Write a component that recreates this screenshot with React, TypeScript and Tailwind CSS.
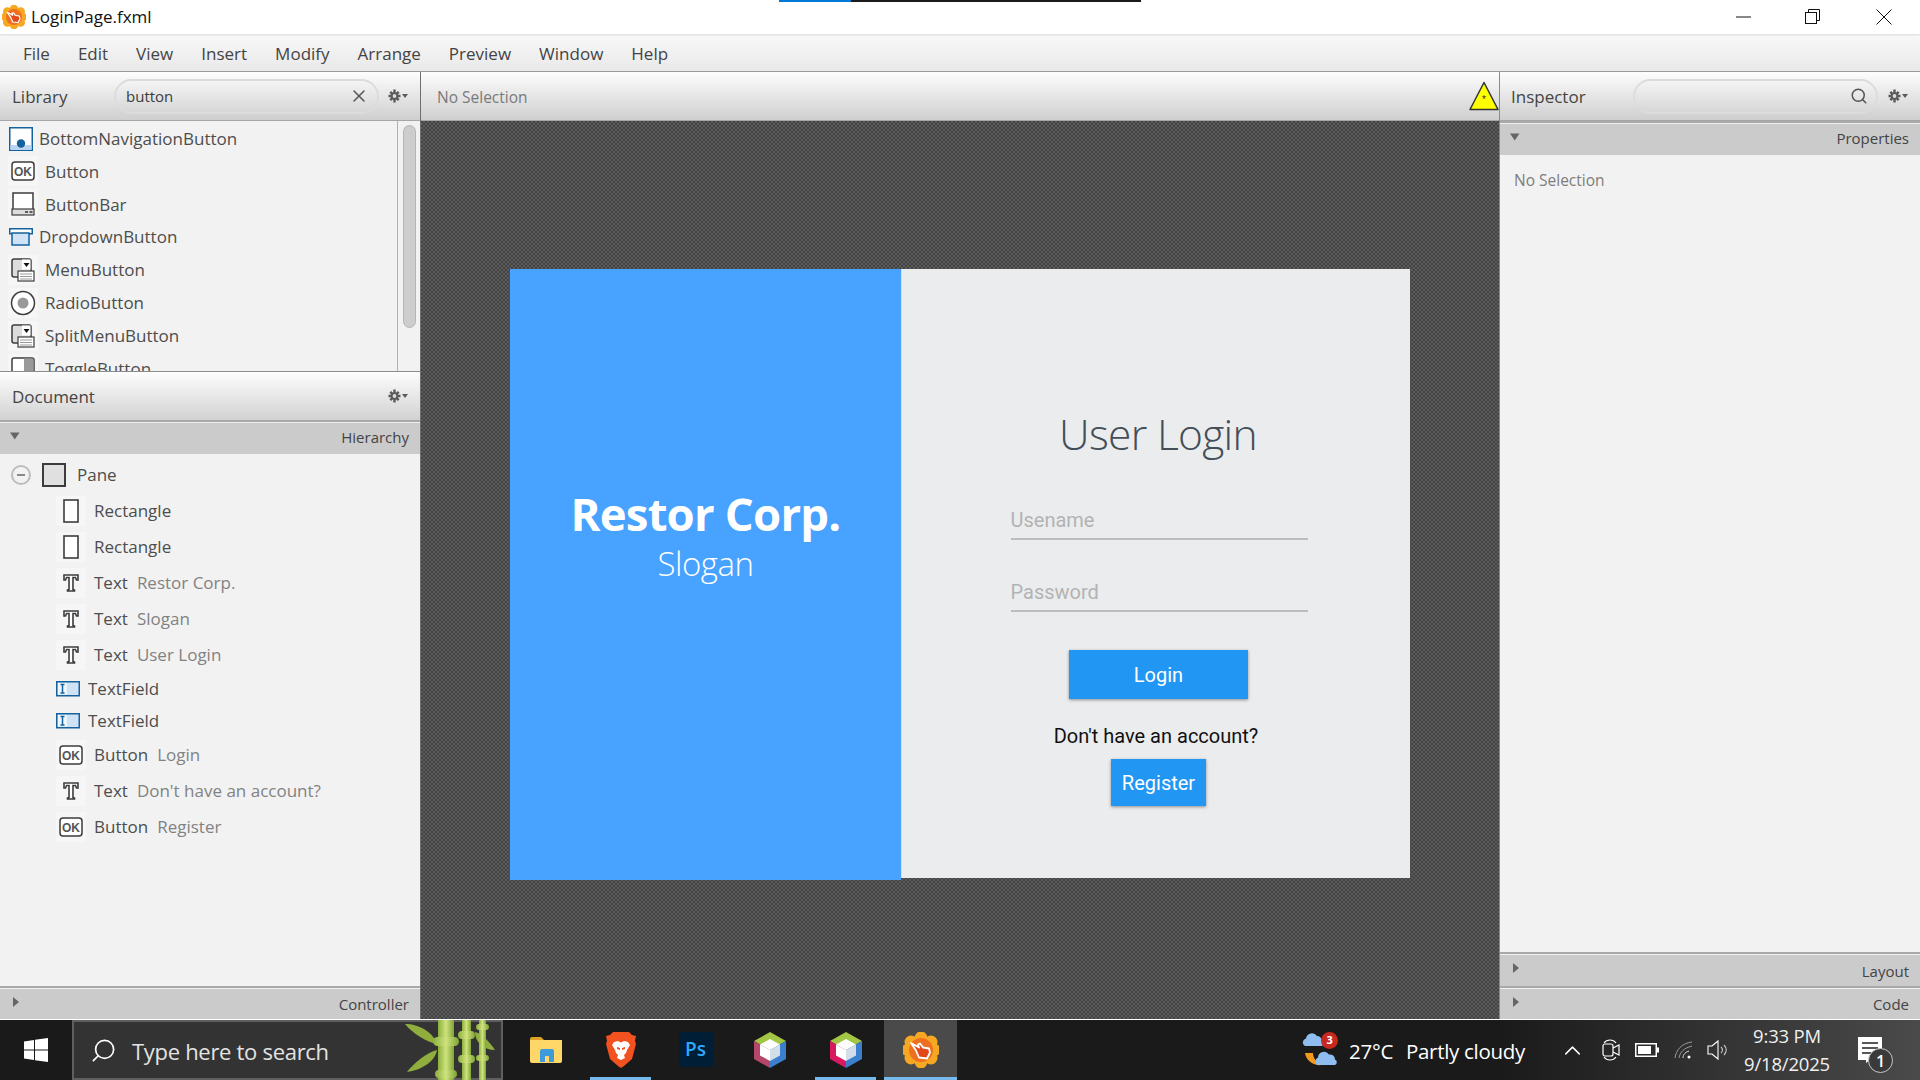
import React from "react";
import { Search, X, ChevronUp } from "lucide-react";

const MENU = ["File", "Edit", "View", "Insert", "Modify", "Arrange", "Preview", "Window", "Help"];

type IconKind = "ok" | "bar" | "menu" | "radio" | "rect" | "text" | "field" | "toggle";

const Framed = ({ children }: { children: React.ReactNode }) => (
  <span className="flex h-[30px] w-[30px] shrink-0 items-center justify-center bg-[#f6f6f6]">{children}</span>
);

const ItemIcon = ({ kind }: { kind: IconKind }) => {
  if (kind === "ok")
    return (
      <svg width="24" height="20" viewBox="0 0 24 20">
        <rect x="1" y="1" width="22" height="18" rx="3" fill="#fff" stroke="#3c3c3c" strokeWidth="1.5" />
        <text x="12" y="14.5" textAnchor="middle" fontSize="12" fontWeight="700" fill="#555" fontFamily="Liberation Sans">OK</text>
      </svg>
    );
  if (kind === "bar")
    return (
      <svg width="24" height="24" viewBox="0 0 24 24">
        <rect x="2" y="1" width="20" height="17" fill="#fff" stroke="#3c3c3c" strokeWidth="1.5" />
        <rect x="1" y="17" width="22" height="6" fill="#ddd" stroke="#3c3c3c" strokeWidth="1.2" />
        <path d="M14 20h3M18.5 20h3" stroke="#333" strokeWidth="1.4" />
      </svg>
    );
  if (kind === "menu")
    return (
      <svg width="26" height="26" viewBox="0 0 26 26">
        <rect x="2" y="2" width="19" height="18" rx="2" fill="#ddd" stroke="#3c3c3c" strokeWidth="1.5" />
        <rect x="12" y="2.5" width="8.5" height="10" fill="#fff" />
        <path d="M13.5 6h6l-3 4z" fill="#111" />
        <rect x="8" y="14" width="16" height="10" fill="#fff" stroke="#3c3c3c" strokeWidth="1.2" />
        <path d="M10 17h12M10 19.5h12M10 22h12" stroke="#999" />
      </svg>
    );
  if (kind === "radio")
    return (
      <svg width="26" height="26" viewBox="0 0 26 26">
        <circle cx="13" cy="13" r="11.5" fill="#fff" stroke="#3c3c3c" strokeWidth="1.5" />
        <circle cx="13" cy="13" r="5.5" fill="#999" />
      </svg>
    );
  if (kind === "rect")
    return (
      <svg width="16" height="24" viewBox="0 0 16 24">
        <rect x="1" y="1" width="14" height="22" fill="#fff" stroke="#3c3c3c" strokeWidth="1.6" />
      </svg>
    );
  if (kind === "text")
    return (
      <svg width="16" height="18" viewBox="0 0 16 18">
        <path d="M1 1h14v5h-1.5l-1-2.5H10V15.5l1.5.5v1h-7v-1l1.5-.5V3.500H3.500l-1 2.500H1z" fill="#fff" stroke="#3c3c3c" strokeWidth="1.6" />
      </svg>
    );
  if (kind === "field")
    return (
      <svg width="24" height="16" viewBox="0 0 24 16">
        <rect x="0.750" y="0.750" width="22.500" height="14" fill="#cfe2f6" stroke="#14639f" strokeWidth="1.5" />
        <rect x="2" y="2" width="9" height="11.500" fill="#fff" opacity="0.7" />
        <path d="M4.500 3.500h4M4.500 12h4M6.500 3.500V12" stroke="#14639f" strokeWidth="1.500" fill="none" />
      </svg>
    );
  return (
    <svg width="24" height="24" viewBox="0 0 24 24">
      <rect x="1" y="1" width="22" height="24" rx="2" fill="#fff" stroke="#3c3c3c" strokeWidth="1.5" />
      <rect x="13" y="1.500" width="9.500" height="23" fill="#999" />
    </svg>
  );
};

const BottomNavIcon = () => (
  <svg width="24" height="24" viewBox="0 0 24 24" className="shrink-0">
    <rect x="0.750" y="0.750" width="22.500" height="22.500" fill="#fff" stroke="#14639f" strokeWidth="1.500" />
    <rect x="1.500" y="18" width="21" height="5" fill="#b9d5ef" />
    <circle cx="12" cy="16.500" r="4.200" fill="#14639f" />
  </svg>
);

const DropdownIcon = () => (
  <svg width="24" height="18" viewBox="0 0 24 18" className="shrink-0">
    <rect x="0.750" y="0.750" width="22.500" height="5" fill="#fff" stroke="#14639f" strokeWidth="1.500" />
    <rect x="3" y="5" width="17" height="12" fill="#cfe2f6" stroke="#14639f" strokeWidth="1.500" />
  </svg>
);

const Gear = () => (
  <svg width="20" height="14" viewBox="0 0 20 14" className="shrink-0">
    <g stroke="#5a5a5a" strokeWidth="2.400">
      <path d="M6.500 .5v13M.5 7h12M2.300 2.800l8.400 8.400M10.700 2.800l-8.400 8.400" />
    </g>
    <circle cx="6.500" cy="7" r="3.800" fill="#5a5a5a" />
    <circle cx="6.500" cy="7" r="1.900" fill="#dcdcdc" />
    <path d="M14 5h6l-3 4z" fill="#5a5a5a" />
  </svg>
);

const HeaderShell = ({ children, className = "" }: { children: React.ReactNode; className?: string }) => (
  <div className={`flex h-[49px] shrink-0 items-center border-b border-[#a6a6a6] bg-[linear-gradient(#fdfdfd,#cfcfcf)] ${className}`}>
    {children}
  </div>
);

const PillField = ({ children, className = "" }: { children?: React.ReactNode; className?: string }) => (
  <div className={`flex h-[35px] items-center justify-between rounded-full border-2 border-[#dcdcdc] ${className}`}>
    {children}
  </div>
);

const SectionBar = ({ label, open = false, height = "h-[34px]" }: { label: string; open?: boolean; height?: string }) => (
  <div className={`flex ${height} shrink-0 items-center justify-between border-t-2 border-[#a9a9a9] bg-[#cbcbcb] pl-[10px] pr-[11px] shadow-[inset_0_1px_0_#efefef]`}>
    <svg width="10" height="10" viewBox="0 0 10 10" className="-mt-[4px]">
      {open ? <path d="M0 1.500h9.500L4.750 8.500z" fill="#666" /> : <path d="M3 0v10l6-5z" fill="#666" />}
    </svg>
    <span className={`text-[15px] text-[#444] ${open ? "-mt-[1px]" : "mt-[2px]"}`}>{label}</span>
  </div>
);

const LIBRARY: { name: string; kind: IconKind | "nav" | "drop" }[] = [
  { name: "BottomNavigationButton", kind: "nav" },
  { name: "Button", kind: "ok" },
  { name: "ButtonBar", kind: "bar" },
  { name: "DropdownButton", kind: "drop" },
  { name: "MenuButton", kind: "menu" },
  { name: "RadioButton", kind: "radio" },
  { name: "SplitMenuButton", kind: "menu" },
  { name: "ToggleButton", kind: "toggle" },
];

const LibraryList = () => (
  <div className="flex h-[250px] shrink-0 overflow-hidden">
    <div className="w-[397px] overflow-hidden pl-[9px] pt-[2px]">
      {LIBRARY.map((item, i) => (
        <div key={item.name} className={`flex items-center text-[17px] text-[#4d4d4d] ${i === 0 ? "h-[32px]" : "h-[32.900px]"}`}>
          {item.kind === "nav" ? (
            <span className="mr-[6px] flex items-center"><BottomNavIcon /></span>
          ) : item.kind === "drop" ? (
            <span className="mr-[6px] flex items-center"><DropdownIcon /></span>
          ) : (
            <span className="-ml-[1px] mr-[7px]">
              <Framed>
                <ItemIcon kind={item.kind} />
              </Framed>
            </span>
          )}
          <span>{item.name}</span>
        </div>
      ))}
    </div>
    <div className="flex-1 border-l border-[#b0b0b0] pl-[5px] pt-[4px]">
      <div className="h-[203px] w-[13px] rounded-full border border-[#b5b5b5] bg-[#cdcdcd]" />
    </div>
  </div>
);

const TREE: { kind: IconKind; name: string; value?: string; h: string }[] = [
  { kind: "rect", name: "Rectangle", h: "h-[36px]" },
  { kind: "rect", name: "Rectangle", h: "h-[36px]" },
  { kind: "text", name: "Text", value: "Restor Corp.", h: "h-[36px]" },
  { kind: "text", name: "Text", value: "Slogan", h: "h-[36px]" },
  { kind: "text", name: "Text", value: "User Login", h: "h-[36px]" },
  { kind: "field", name: "TextField", h: "h-[32px]" },
  { kind: "field", name: "TextField", h: "h-[32px]" },
  { kind: "ok", name: "Button", value: "Login", h: "h-[36px]" },
  { kind: "text", name: "Text", value: "Don't have an account?", h: "h-[36px]" },
  { kind: "ok", name: "Button", value: "Register", h: "h-[36px]" },
];

const HierarchyTree = () => (
  <div className="flex-1 pt-[2px] text-[17px] text-[#4d4d4d]">
    <div className="flex h-[37px] items-center pl-[11px]">
      <span className="flex h-[20px] w-[20px] items-center justify-center rounded-full border-2 border-[#bdbdbd]">
        <span className="h-[2px] w-[8px] bg-[#888]" />
      </span>
      <span className="ml-[11px] h-[24px] w-[24px] border-2 border-[#3c3c3c] bg-[#e0e0e0]" />
      <span className="ml-[11px]">Pane</span>
    </div>
    {TREE.map((row, i) => (
      <div key={i} className={`flex ${row.h} items-center`}>
        {row.kind === "field" ? (
          <span className="ml-[56px] mr-[8px] flex"><ItemIcon kind="field" /></span>
        ) : (
          <span className="ml-[56px] mr-[8px]">
            <Framed>
              <ItemIcon kind={row.kind} />
            </Framed>
          </span>
        )}
        <span>{row.name}</span>
        {row.value && <span className="ml-[9px] text-[#828282]">{row.value}</span>}
      </div>
    ))}
  </div>
);

const LeftPanel = () => (
  <aside className="flex w-[421px] shrink-0 flex-col border-r border-[#6f6f6f] bg-[#f2f2f2]">
    <HeaderShell className="pl-[12px] pr-[12px]">
      <span className="mt-[2px] w-[102px] text-[17px] text-[#444]">Library</span>
      <PillField className="w-[265px] pl-[10px] pr-[8px]">
        <span className="text-[15px] text-[#3c3c3c]">button</span>
        <X size={20} strokeWidth={1.800} className="text-[#555]" />
      </PillField>
      <span className="ml-auto"><Gear /></span>
    </HeaderShell>
    <LibraryList />
    <div className="flex h-[49px] shrink-0 items-center justify-between border-t border-[#8c8c8c] bg-[linear-gradient(#fdfdfd,#d2d2d2)] pl-[12px] pr-[12px]">
      <span className="mt-[1px] text-[17px] text-[#444]">Document</span>
      <Gear />
    </div>
    <SectionBar label="Hierarchy" open />
    <HierarchyTree />
    <SectionBar label="Controller" height="h-[33px]" />
  </aside>
);

const LoginPane = () => (
  <div className="flex h-[611px] w-[900px] items-start">
    <div className="flex h-[611px] w-[391px] flex-col items-center bg-[#48a2ff] pt-[214px] text-white">
      <div className="text-[45.500px] font-bold leading-[60px] tracking-[-0.800px]">Restor Corp.</div>
      <div className="-mt-[1px] text-[33px] font-light leading-[44px] tracking-[-0.500px]">Slogan</div>
    </div>
    <div className="flex h-[609px] flex-1 flex-col items-center border-l border-[#cfdff0] bg-[#ebecee]">
      <div className="mt-[140px] pl-[4px] text-[42.500px] font-light leading-[50px] tracking-[-0.700px] text-[#434e58]">User Login</div>
      <div className="ml-[6px] mt-[44px] flex h-[37px] w-[297px] items-center border-b-2 border-[#bdbdbd] pb-[2px] font-['Roboto',sans-serif] text-[20px] text-[#b3b3b3]">Usename</div>
      <div className="ml-[6px] mt-[35px] flex h-[37px] w-[297px] items-center border-b-2 border-[#bdbdbd] pb-[2px] font-['Roboto',sans-serif] text-[20px] text-[#b3b3b3]">Password</div>
      <div className="ml-[5px] mt-[38px] flex h-[49px] w-[179px] items-center justify-center bg-[#2196f3] font-['Roboto',sans-serif] text-[20px] text-white shadow-[0_1px_3px_rgba(0,0,0,0.4)]">Login</div>
      <div className="mt-[23px] font-['Roboto',sans-serif] text-[20px] leading-[28px] text-[#111]">Don't have an account?</div>
      <div className="ml-[5px] mt-[9px] flex h-[47px] w-[95px] items-center justify-center bg-[#2196f3] font-['Roboto',sans-serif] text-[20px] text-white shadow-[0_1px_3px_rgba(0,0,0,0.4)]">Register</div>
    </div>
  </div>
);

const CenterPanel = () => (
  <main className="flex min-w-0 flex-1 flex-col">
    <HeaderShell className="justify-between pl-[16px]">
      <span className="mt-[3px] text-[15.500px] text-[#7a7a7a]">No Selection</span>
      <svg width="30" height="30" viewBox="0 0 30 30">
        <path d="M15 1.500 29 28.500H1z" fill="#ffff00" stroke="#333" strokeWidth="1.500" strokeLinejoin="round" />
        <text x="15" y="22" textAnchor="middle" fontSize="10" fill="#333" fontFamily="Liberation Sans">*</text>
      </svg>
    </HeaderShell>
    <div className="flex flex-1 items-center justify-center bg-[repeating-conic-gradient(#5b5b5b_0_25%,#434343_0_50%)] bg-[length:4px_4px] pt-[9px]">
      <LoginPane />
    </div>
  </main>
);

const RightPanel = () => (
  <aside className="flex w-[421px] shrink-0 flex-col border-l border-[#8a8a8a] bg-[#f2f2f2]">
    <HeaderShell className="pl-[11px] pr-[12px]">
      <span className="mt-[2px] w-[122px] text-[17px] text-[#444]">Inspector</span>
      <PillField className="w-[245px] pr-[8px]">
        <span />
        <Search size={18} strokeWidth={2} className="text-[#555]" />
      </PillField>
      <span className="ml-auto"><Gear /></span>
    </HeaderShell>
    <SectionBar label="Properties" open />
    <div className="flex-1 pl-[14px] pt-[14px] text-[15.500px] text-[#7d7d7d]">No Selection</div>
    <SectionBar label="Layout" />
    <SectionBar label="Code" height="h-[33px]" />
  </aside>
);

const SceneLogo = ({ size }: { size: number }) => (
  <svg width={size} height={size} viewBox="0 0 36 36" className="shrink-0">
    {[[18, 6], [28, 10], [31, 18], [28, 26], [18, 30], [8, 26], [5, 18], [8, 10]].map(([cx, cy]) => (
      <circle key={`${cx}-${cy}`} cx={cx} cy={cy} r="6.500" fill="#f7a823" />
    ))}
    <circle cx="18" cy="18" r="12" fill="#ee6f1f" />
    <path d="M8 11l8 4.500-1-3 2-1 3 4 6 1 1 4-3 6-8-1-3-7z" fill="#e2491a" stroke="#fff" strokeWidth="1.800" strokeLinejoin="round" />
  </svg>
);

const NetBeans = ({ left }: { left: string }) => (
  <svg width="32" height="36" viewBox="0 0 32 36">
    <path d="M16 0 32 9 16 18 0 9z" fill="#a3c644" />
    <path d="M0 9 16 18V36L0 27z" fill={left} />
    <path d="M32 9 16 18V36L32 27z" fill="#3c7fcc" />
    <path d="M16 7 26 12.500 16 18 6 12.500z" fill="#fff" />
    <path d="M6 12.500 16 18V29L6 23.500z" fill="#fff" />
    <path d="M26 12.500 16 18V29L26 23.500z" fill="#d3deea" />
  </svg>
);

const Bamboo = () => (
  <svg width="91" height="60" viewBox="0 0 91 60">
    <defs>
      <linearGradient id="stalk" x1="0" x2="1" y1="0" y2="0">
        <stop offset="0" stopColor="#8bb03c" />
        <stop offset="0.500" stopColor="#cfe27e" />
        <stop offset="1" stopColor="#7ea434" />
      </linearGradient>
    </defs>
    <path d="M32 24C22 22 8 14 0 4 14 4 28 12 32 24z" fill="#8fae3e" />
    <path d="M32 30C22 32 8 44 2 52 16 50 30 42 32 30z" fill="#8fae3e" />
    <path d="M70 12C78 14 86 24 90 30 78 30 70 22 70 12z" fill="#8fae3e" />
    <rect x="33" y="0" width="16" height="60" fill="url(#stalk)" />
    <rect x="57" y="0" width="9" height="60" fill="url(#stalk)" />
    <rect x="74" y="0" width="7" height="60" fill="url(#stalk)" />
    <rect x="28" y="17" width="26" height="9" rx="4.500" fill="url(#stalk)" />
    <rect x="30" y="50" width="22" height="8" rx="4" fill="url(#stalk)" />
    <rect x="53" y="11" width="17" height="8" rx="4" fill="url(#stalk)" />
    <rect x="53" y="35" width="17" height="8" rx="4" fill="url(#stalk)" />
    <rect x="71" y="4" width="13" height="6" rx="3" fill="url(#stalk)" />
    <rect x="71" y="35" width="13" height="6" rx="3" fill="url(#stalk)" />
  </svg>
);

const WeatherIcon = () => (
  <svg width="38" height="34" viewBox="0 0 38 34">
    <path d="M4 20c1 8 9 13 17 12-6-3-9-7-9-12z" fill="#f29a1f" />
    <path d="M4 13a4 4 0 0 1 1-7.500A6 6 0 0 1 16 3a5 5 0 0 1 5 5 3 3 0 0 1 0 5z" fill="#8fbdf0" />
    <path d="M17 32a4 4 0 0 1 0-7.500 6 6 0 0 1 11-3 5 5 0 0 1 6 5 3 3 0 0 1 0 5.500z" fill="#8fbdf0" />
  </svg>
);

const TaskApp = ({ children, width, bar = false, active = false }: { children: React.ReactNode; width: string; bar?: boolean; active?: boolean }) => (
  <div className={`relative flex h-[60px] items-center justify-center pb-[1px] ${width} ${active ? "bg-[#4a4a4a]" : ""}`}>
    {children}
    {bar && <span className="absolute bottom-0 left-0 right-0 h-[3px] bg-[#76b9ed]" />}
  </div>
);

const Taskbar = () => (
  <footer className="flex h-[60px] shrink-0 items-center bg-[linear-gradient(90deg,#1a1a1a_0%,#1a1a1a_78%,#4a4a4a_100%)] text-white">
    <div className="flex h-[60px] w-[72px] shrink-0 items-center justify-center">
      <svg width="24" height="24" viewBox="0 0 24 24" fill="#fff">
        <path d="M0 3.500 10 2v9.500H0zM11 1.800 24 0v11.500H11zM0 12.500h10V22L0 20.500zM11 12.500h13V24l-13-1.800z" />
      </svg>
    </div>
    <div className="flex h-[60px] w-[431px] shrink-0 items-center justify-between border-2 border-[#5f5f5f] bg-[#333] pl-[16px] pr-[5px]">
      <div className="flex items-center">
        <Search size={27} strokeWidth={1.500} className="-scale-x-100 text-white" />
        <span className="ml-[15px] mt-[2px] text-[22px] tracking-[-0.300px] text-[#e3e3e3]">Type here to search</span>
      </div>
      <Bamboo />
    </div>
    <div className="ml-[5px] flex items-center">
      <TaskApp width="w-[75px]">
        <svg width="32" height="26" viewBox="0 0 32 26">
          <path d="M0 2a2 2 0 0 1 2-2h9l3 3H0z" fill="#dca326" />
          <path d="M0 3h32v21a2 2 0 0 1-2 2H2a2 2 0 0 1-2-2z" fill="#ffd768" />
          <path d="M10 25v-11a2 2 0 0 1 2-2h10a2 2 0 0 1 2 2v11h-5v-6h-4v6z" fill="#3d9bdc" />
        </svg>
      </TaskApp>
      <TaskApp width="w-[61px] mx-[7px]" bar>
        <svg width="30" height="36" viewBox="0 0 30 36">
          <path d="M7 0h16l3 3 4 1-1 5 1 3-4 15-8 7-3 2-3-2-8-7L0 12l1-3-1-5 4-1z" fill="#f1521f" />
          <path d="M8 10l4-1 3 1.500L18 9l4 1 2 3-3 5-1 3-2 2 1 3-4 2-4-2 1-3-2-2-1-3-3-5z" fill="#fff" />
          <path d="M11 15l3 1v2l-3-1zM19 15l-3 1v2l3-1z" fill="#f1521f" />
        </svg>
      </TaskApp>
      <TaskApp width="w-[75px]">
        <div className="flex h-[35px] w-[34px] items-center justify-center rounded-[3px] bg-[#001e36] text-[19px] font-semibold text-[#31a8ff]">Ps</div>
      </TaskApp>
      <TaskApp width="w-[74px] mr-[8px]">
        <NetBeans left="#b5476b" />
      </TaskApp>
      <TaskApp width="w-[61px] mr-[8px]" bar>
        <NetBeans left="#d81b60" />
      </TaskApp>
      <TaskApp width="w-[73px]" bar active>
        <SceneLogo size={36} />
      </TaskApp>
    </div>
    <div className="ml-auto flex items-center">
      <div className="relative mr-[10px] h-[34px] w-[38px]">
        <WeatherIcon />
        <span className="absolute -top-[1px] right-[1px] flex h-[17px] w-[17px] items-center justify-center rounded-full bg-[#c8281e] text-[11px] font-bold">3</span>
      </div>
      <span className="mt-[2px] text-[20.500px] tracking-[-0.300px]">27°C</span>
      <span className="ml-[13px] mt-[2px] text-[20.500px] tracking-[-0.300px]">Partly cloudy</span>
      <ChevronUp size={27} strokeWidth={1.300} className="ml-[34px]" />
      <svg width="20" height="28" viewBox="0 0 20 28" fill="none" stroke="#fff" strokeWidth="1.200" className="ml-[15px]">
        <path d="M3 7c3-4 9-4 12 0M3 21c3 4 9 4 12 0" />
        <rect x="2" y="8" width="10" height="12" rx="2" />
        <path d="M12 12l6-3v10l-6-3" />
      </svg>
      <svg width="24" height="14" viewBox="0 0 24 14" className="ml-[14px]">
        <rect x="0.750" y="0.750" width="20.500" height="12.500" fill="none" stroke="#fff" strokeWidth="1.500" />
        <rect x="3" y="3" width="13" height="8" fill="#fff" />
        <rect x="22" y="4.500" width="2" height="5" fill="#fff" />
      </svg>
      <svg width="20" height="20" viewBox="0 0 20 20" fill="none" stroke="#9a9a9a" strokeWidth="1" className="ml-[15px]">
        <path d="M1 18C2 10 8 3 18 2M5 18C6 12 10 8 18 6" />
        <path d="M9 18C9 14 12 12 15 11" stroke="#e0e0e0" />
        <circle cx="15" cy="17" r="1.500" fill="#fff" stroke="none" />
      </svg>
      <svg width="24" height="22" viewBox="0 0 24 22" fill="none" stroke="#fff" strokeWidth="1.100" className="ml-[13px]">
        <path d="M1 7h4l6-5v18l-6-5H1z" />
        <path d="M14 8c2 2 2 4 0 6M17 6c3 3 3 7 0 10" stroke="#c8c8c8" />
      </svg>
      <div className="ml-[10px] flex w-[92px] flex-col items-center text-[18.500px] leading-[28px] tracking-[-0.200px] text-[#f0f0f0]">
        <span>9:33 PM</span>
        <span>9/18/2025</span>
      </div>
      <div className="relative ml-[25px] mr-[38px] h-[26px] w-[24px]">
        <svg width="24" height="26" viewBox="0 0 24 26">
          <path d="M0 0h24v23H12l-4 3v-3H0z" fill="#fff" />
          <path d="M4 6h16M4 11h16M4 16h16" stroke="#222" strokeWidth="1.300" />
        </svg>
        <span className="absolute -bottom-[10px] -right-[11px] flex h-[25px] w-[25px] items-center justify-center rounded-full border border-[#c8c8c8] bg-[#3a3a3a] text-[16px] font-semibold">1</span>
      </div>
    </div>
  </footer>
);

export default function App() {
  return (
    <div className="flex h-[1080px] w-[1920px] flex-col overflow-hidden bg-white font-['Open_Sans',sans-serif]">
      <header className="relative flex h-[34px] shrink-0 items-center bg-white pl-[2px] shadow-[0_1px_2px_rgba(0,0,0,0.12)]">
        <SceneLogo size={24} />
        <span className="ml-[5px] text-[17px] text-[#111]">LoginPage.fxml</span>
        {/* loading strip sitting on the window top edge */}
        <div className="absolute left-[779px] top-0 flex h-[2px] w-[362px]">
          <span className="w-[72px] bg-[#0078d7]" />
          <span className="flex-1 bg-[#1a1a1a]" />
        </div>
        <div className="ml-auto flex items-center">
          <svg width="15" height="2" viewBox="0 0 15 2"><path d="M0 1h15" stroke="#111" /></svg>
          <svg width="16" height="16" viewBox="0 0 16 16" fill="none" stroke="#111" className="ml-[54px]">
            <rect x="0.500" y="3.500" width="11" height="11" fill="#fff" />
            <path d="M3.500 3V.5h11v11H12" />
          </svg>
          <svg width="16" height="16" viewBox="0 0 16 16" stroke="#111" className="ml-[55px] mr-[28px]">
            <path d="M.5.5l15 15M15.500.5l-15 15" />
          </svg>
        </div>
      </header>
      <nav className="flex h-[38px] shrink-0 items-center gap-[28px] border-b border-[#9a9a9a] bg-[linear-gradient(#f8f8f8,#e9e9e9)] pl-[23px] pt-[2px] text-[17px] text-[#444]">
        {MENU.map((m) => (
          <span key={m}>{m}</span>
        ))}
      </nav>
      <div className="flex min-h-0 flex-1 border-b border-white">
        <LeftPanel />
        <CenterPanel />
        <RightPanel />
      </div>
      <Taskbar />
    </div>
  );
}
